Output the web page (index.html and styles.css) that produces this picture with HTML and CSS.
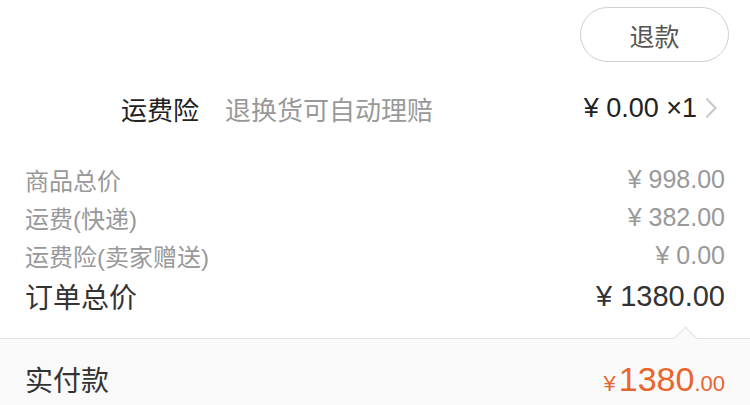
FILE: index.html
```html
<!doctype html>
<html>
  <head>
    <title>订单详情</title>
    <meta charset="UTF-8" />
    <meta name="viewport" content="width=device-width, initial-scale=1.0" />
    <link rel="stylesheet" href="styles.css">
  </head>

  <body>
    <div class="actions">
      <button class="refund">退款</button>
    </div>

    <div class="insurance">
      <span class="ins-name">运费险</span>
      <span class="ins-desc">退换货可自动理赔</span>
      <span class="ins-price">¥ 0.00 ×1</span>
      <svg class="chevron" width="12" height="22" viewBox="0 0 12 22">
        <path d="M1.5 1.5l9 9.5-9 9.5" fill="none" stroke="#c8c8c8" stroke-width="2" />
      </svg>
    </div>

    <div class="summary">
      <div class="row">
        <span>商品总价</span>
        <span class="amount">¥ 998.00</span>
      </div>
      <div class="row">
        <span>运费(快递)</span>
        <span class="amount">¥ 382.00</span>
      </div>
      <div class="row">
        <span>运费险(卖家赠送)</span>
        <span class="amount">¥ 0.00</span>
      </div>
      <div class="row total">
        <span>订单总价</span>
        <span class="amount">¥ 1380.00</span>
      </div>
    </div>

    <div class="paid">
      <span class="paid-label">实付款</span>
      <span class="paid-amount"><small>¥</small>1380<small>.00</small></span>
    </div>
  </body>
</html>
```

FILE: styles.css
```css
html {
  margin: 0;
  padding: 0;
}
body {
  margin: 0;
  font-family: 'Helvetica Neue', 'Liberation Sans', 'Noto Sans CJK SC', sans-serif;
  -webkit-font-smoothing: antialiased;
  background-color: #ffffff;
  color: #333333;
  overflow: hidden;
}
.actions {
  display: flex;
  justify-content: flex-end;
  padding: 7px 21px 0 0;
}
.refund {
  width: 149px;
  height: 55px;
  border: 1px solid #cfcfcf;
  border-radius: 28px;
  background: #ffffff;
  color: #555555;
  font-family: inherit;
  font-size: 25px;
  padding: 0;
}
.insurance {
  display: flex;
  align-items: center;
  height: 92px;
  padding: 0 33px 0 121px;
  font-size: 26px;
}
.ins-name {
  color: #222222;
}
.ins-desc {
  margin-left: 26px;
  color: #999999;
  flex: 1;
}
.ins-price {
  color: #222222;
  font-size: 27px;
}
.chevron {
  margin-left: 8px;
}
.summary {
  padding: 6px 25px 20px 25px;
}
.row {
  display: flex;
  justify-content: space-between;
  align-items: center;
  height: 38px;
  font-size: 24px;
  color: #999999;
}
.row .amount {
  font-size: 25px;
}
.row.total {
  height: 44px;
  font-size: 28px;
  color: #333333;
}
.row.total .amount {
  font-size: 29px;
}
.paid {
  position: relative;
  display: flex;
  justify-content: space-between;
  align-items: center;
  height: 80px;
  padding: 0 25px;
  background-color: #fafafa;
  border-top: 1px solid #e3e3e3;
}
.paid::before {
  content: '';
  position: absolute;
  top: -9px;
  left: 677px;
  width: 16px;
  height: 16px;
  background-color: #fafafa;
  border-top: 1px solid #e3e3e3;
  border-left: 1px solid #e3e3e3;
  transform: rotate(45deg);
}
.paid-label {
  font-size: 28px;
  color: #333333;
}
.paid-amount {
  color: #e8652d;
  font-size: 34px;
}
.paid-amount small {
  font-size: 22px;
}
.paid-amount small:first-child {
  margin-right: 3px;
}
```
